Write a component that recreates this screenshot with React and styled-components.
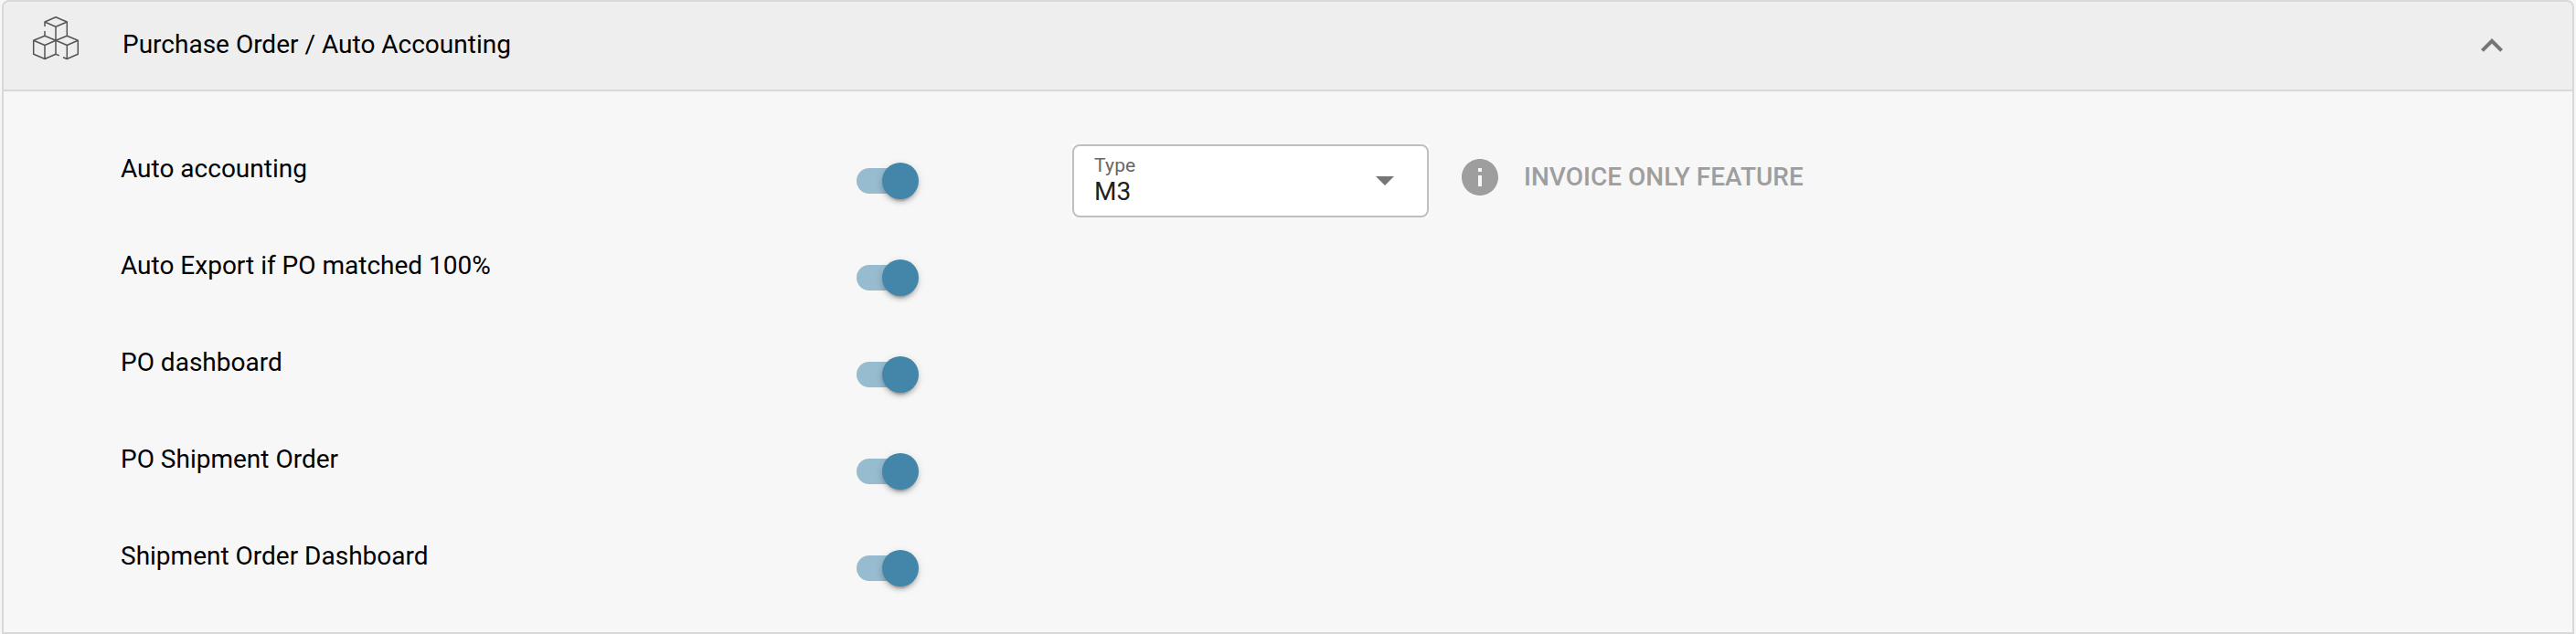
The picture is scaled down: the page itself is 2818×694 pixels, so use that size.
import React from "react";
import styled, { createGlobalStyle } from "styled-components";

const GlobalStyle = createGlobalStyle`
  * { box-sizing: border-box; }
  body {
    margin: 0;
    background: #f7f7f7;
    font-family: Roboto, "Liberation Sans", sans-serif;
    font-size: 28px;
    color: #000;
  }
`;

const Panel = styled.section`
  height: 694px;
  margin: 0 2px;
  border: 2px solid #d8d8d8;
  border-radius: 8px 8px 0 0;
  background: #f7f7f7;
  overflow: hidden;
`;

const Header = styled.header`
  display: flex;
  align-items: center;
  height: 98px;
  padding: 0 64px 0 30px;
  background: #eeeeee;
  border-bottom: 2px solid #d8d8d8;
`;

const CubesIcon = styled.svg`
  flex: none;
  width: 54px;
  height: 52px;
  margin-bottom: 16px;
`;

const Title = styled.h2`
  flex: 1;
  margin: 0 0 2px 46px;
  font-size: 28px;
  font-weight: 400;
  line-height: 32px;
`;

const ChevronIcon = styled.svg`
  flex: none;
  width: 48px;
  height: 48px;
  fill: #757575;
`;

const Settings = styled.div`
  display: grid;
  grid-auto-rows: 106px;
  padding: 58px 0 0 128px;
`;

const Row = styled.div`
  display: flex;
  align-items: flex-start;
`;

const Label = styled.div`
  width: 805px;
  padding-top: 11px;
  line-height: 32px;
`;

const Track = styled.div`
  width: 64px;
  height: 28px;
  margin: 26px 172px 0 0;
  display: flex;
  align-items: center;
  justify-content: flex-end;
  border-radius: 14px;
  background: #97bbcf;
`;

const Thumb = styled.div`
  flex: none;
  width: 40px;
  height: 40px;
  margin-right: -4px;
  border-radius: 50%;
  background: #4386aa;
  box-shadow: 0 6px 2px -4px rgba(0, 0, 0, 0.2),
    0 4px 4px 0 rgba(0, 0, 0, 0.14), 0 2px 10px 0 rgba(0, 0, 0, 0.12);
`;

const SelectBacking = styled.div`
  background: #fff;
`;

const Select = styled.div`
  display: flex;
  align-items: center;
  justify-content: space-between;
  width: 390px;
  height: 80px;
  padding: 0 36px 0 22px;
  border: 2px solid #bfbfbf;
  border-radius: 8px;
`;

const SelectLabel = styled.div`
  margin-top: -2px;
  font-size: 21px;
  line-height: 26px;
  letter-spacing: 0.2px;
  color: #666;
`;

const SelectValue = styled.div`
  line-height: 32px;
  color: #212121;
`;

const Arrow = styled.svg`
  width: 20px;
  height: 10px;
  fill: #757575;
`;

const Note = styled.div`
  display: flex;
  align-items: center;
  margin: 16px 0 0 36px;
  gap: 28px;
  color: #9e9e9e;
  font-weight: 500;
  line-height: 40px;
  white-space: nowrap;
`;

const InfoIcon = styled.svg`
  width: 40px;
  height: 40px;
  fill: #9e9e9e;
`;

const options = [
  "Auto accounting",
  "Auto Export if PO matched 100%",
  "PO dashboard",
  "PO Shipment Order",
  "Shipment Order Dashboard",
];

function Toggle() {
  return (
    <Track role="switch" aria-checked="true">
      <Thumb />
    </Track>
  );
}

function TypeSelect() {
  return (
    <SelectBacking>
      <Select>
        <div>
          <SelectLabel>Type</SelectLabel>
          <SelectValue>M3</SelectValue>
        </div>
        <Arrow viewBox="0 0 20 10">
          <path d="M0 0h20L10 10z" />
        </Arrow>
      </Select>
    </SelectBacking>
  );
}

export default function App() {
  return (
    <>
      <GlobalStyle />
      <Panel>
        <Header>
          <CubesIcon
            viewBox="34 16 54 52"
            fill="none"
            stroke="#555"
            strokeWidth="1.5"
            strokeLinejoin="round"
          >
            <path d="M49 29V24L61 18.7L73.3 24V39.3M49 24L61 29.3L73.3 24M61 29.3V59.3M49 34V39.3" />
            <path d="M61 44.3L49 39.3L36.7 44.3V59.3L49 64.5L61 59.3M36.7 44.3L49 49.5L61 44.3M49 49.5V64.5" />
            <path d="M61 44.3L73.3 39.3L85.3 44.3V59.3L73.3 64.5L69 62.7M61 59.3L64.8 60.9M61 44.3L73.3 49.5L85.3 44.3M73.3 49.5V64.5" />
          </CubesIcon>
          <Title>Purchase Order / Auto Accounting</Title>
          <ChevronIcon viewBox="0 0 24 24">
            <path d="M12 8l-6 6 1.41 1.41L12 10.83l4.59 4.58L18 14z" />
          </ChevronIcon>
        </Header>
        <Settings>
          {options.map((name, i) => (
            <Row key={name}>
              <Label>{name}</Label>
              <Toggle />
              {i === 0 && (
                <>
                  <TypeSelect />
                  <Note>
                    <InfoIcon viewBox="2 2 20 20">
                      <path d="M12 2C6.48 2 2 6.48 2 12s4.48 10 10 10 10-4.48 10-10S17.52 2 12 2zm1 15h-2v-6h2v6zm0-8h-2V7h2v2z" />
                    </InfoIcon>
                    INVOICE ONLY FEATURE
                  </Note>
                </>
              )}
            </Row>
          ))}
        </Settings>
      </Panel>
    </>
  );
}
